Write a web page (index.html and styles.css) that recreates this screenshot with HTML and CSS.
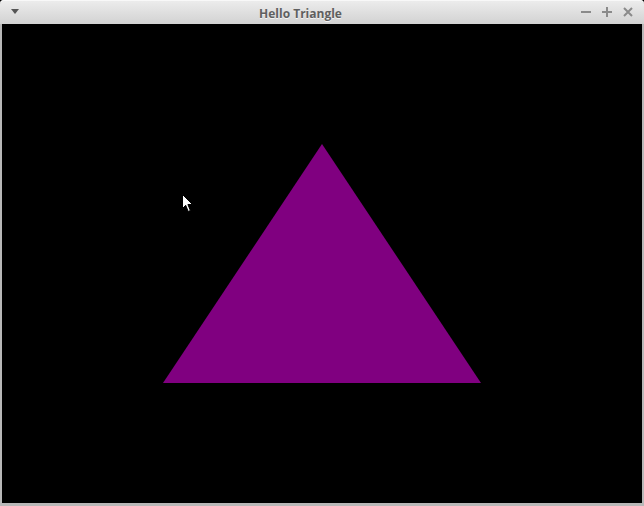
FILE: index.html
```html
<!DOCTYPE html>
<html>
<head>
<meta charset="utf-8">
<link rel="stylesheet" href="styles.css">
</head>
<body>
<div class="window">
  <div class="titlebar">
    <div class="menu-btn">
      <svg width="8" height="5" viewBox="0 0 8 5"><polygon points="0,0 8,0 4,5" fill="#555"/></svg>
    </div>
    <div class="title">Hello Triangle</div>
    <div class="controls">
      <svg class="ctl" width="10" height="10" viewBox="0 0 10 10"><rect x="0" y="4" width="10" height="2" fill="#8a8a8a"/></svg>
      <svg class="ctl" width="10" height="10" viewBox="0 0 10 10"><rect x="0" y="4" width="10" height="2" fill="#8a8a8a"/><rect x="4" y="0" width="2" height="10" fill="#8a8a8a"/></svg>
      <svg class="ctl" width="10" height="10" viewBox="0 0 10 10"><path d="M1 1 L9 9 M9 1 L1 9" stroke="#8a8a8a" stroke-width="2"/></svg>
    </div>
  </div>
  <div class="frame">
    <div class="canvas">
      <svg class="scene" width="640" height="479" viewBox="0 0 640 479">
        <polygon points="320,120 161,359 479,359" fill="#800080"/>
      </svg>
      <svg class="cursor" width="12" height="19" viewBox="0 0 12 19">
        <path d="M0.5 0.5 L0.5 14.5 L3.7 11.3 L6.2 17.5 L8.4 16.5 L5.9 10.5 L10.5 10.5 Z" fill="#fff" stroke="#000" stroke-width="1"/>
      </svg>
    </div>
  </div>
</div>
</body>
</html>
```
FILE: styles.css
```css
html, body {
  margin: 0;
  padding: 0;
  background: #000;
}
.window {
  width: 644px;
  height: 506px;
  display: flex;
  flex-direction: column;
  overflow: hidden;
}
.titlebar {
  height: 24px;
  flex: none;
  display: flex;
  align-items: center;
  background: linear-gradient(#ededed, #d2d2d2);
  border-radius: 4px 4px 0 0;
  box-shadow: inset 0 1px 0 #f8f8f8;
}
.menu-btn {
  width: 30px;
  display: flex;
  justify-content: center;
}
.menu-btn svg {
  display: block;
  margin-top: -2px;
}
.title {
  flex: 1;
  text-align: center;
  font-family: "Open Sans", "DejaVu Sans", sans-serif;
  font-weight: 700;
  font-size: 12px;
  color: #5f5f5f;
  letter-spacing: 0;
  text-shadow: 0 1px 0 #f4f4f4;
  padding-right: 10px;
  padding-top: 2px;
}
.controls {
  display: flex;
  gap: 11px;
  padding-right: 11px;
  align-items: center;
}
.ctl {
  display: block;
}
.frame {
  flex: 1;
  background: #b8b8b8;
  padding: 0 2px 3px 2px;
  display: flex;
}
.canvas {
  flex: 1;
  background: #000;
  position: relative;
}
.scene {
  display: block;
}
.cursor {
  position: absolute;
  left: 180px;
  top: 170px;
}
```
